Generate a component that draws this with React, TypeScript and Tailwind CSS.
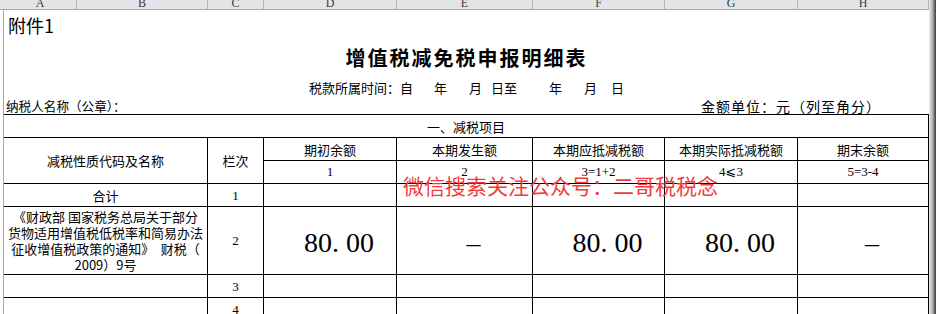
export default function App() {
  const heads = [
    { l: "A", w: "w-[73px]" },
    { l: "B", w: "w-[131px]" },
    { l: "C", w: "w-[56px]" },
    { l: "D", w: "w-[133px]" },
    { l: "E", w: "w-[136px]" },
    { l: "F", w: "w-[132px]" },
    { l: "G", w: "w-[133px]" },
    { l: "H", w: "w-[131px]" },
  ];
  const cell = "bg-white flex items-center justify-center";
  const cjk = "font-['Noto_Sans_CJK_SC',sans-serif]";
  const serif = "font-['Liberation_Serif','DejaVu_Serif',serif]";
  const big = `${cell} ${serif} text-[28px] leading-none pl-[18px] pt-[5px]`;
  return (
    <div className={`relative w-[936px] h-[314px] overflow-hidden bg-white flex text-black ${cjk}`}>
      <div className="w-[929px] shrink-0 flex flex-col">
        <div className="flex h-[10px] shrink-0 bg-[#e3e4e7] border-b border-[#a8a8a8]">
          <div className="w-[4px] h-[9px]" />
          {heads.map((h) => (
            <div
              key={h.l}
              className={`${h.w} h-[9px] overflow-hidden border-r border-[#b5b5b5] flex items-end justify-center`}
            >
              <span className={`${serif} text-[12px] leading-[11px] text-[#3a3a3a]`}>{h.l}</span>
            </div>
          ))}
        </div>
        <div className="flex flex-1">
          <div className="w-[4px] shrink-0 border-r border-[#a8a8a8]" />
          <div className="w-[925px] shrink-0 flex flex-col">
            <div className="h-[30px] flex items-center pl-[4px] text-[18px] leading-none">附件1</div>
            <div className="h-[36px] flex items-center justify-center text-[20px] font-bold tracking-[2px] leading-none">
              增值税减免税申报明细表
            </div>
            <div className="h-[22px] flex items-center justify-center text-[13px] leading-none">
              <span>税款所属时间：自</span>
              <span className="ml-[21px]">年</span>
              <span className="ml-[22px]">月</span>
              <span className="ml-[9px]">日至</span>
              <span className="ml-[32px]">年</span>
              <span className="ml-[22px]">月</span>
              <span className="ml-[14px]">日</span>
            </div>
            <div className="h-[16px] flex items-center justify-between pl-[2px] pr-[48px] leading-none">
              <span className="text-[12.6px]">纳税人名称（公章）：</span>
              <span className="text-[14px] tracking-[1px]">金额单位：元（列至角分）</span>
            </div>
            <div className="grid bg-black gap-px pt-px pr-px pb-px grid-cols-[203px_55px_132px_135px_131px_132px_130px] grid-rows-[22px_22px_22px_22px_67px_22px_22px] text-[13px] leading-none">
              <div className={`${cell} col-span-7`}>一、减税项目</div>
              <div className={`${cell} row-span-2`}>减税性质代码及名称</div>
              <div className={`${cell} row-span-2`}>栏次</div>
              <div className={cell}>期初余额</div>
              <div className={cell}>本期发生额</div>
              <div className={cell}>本期应抵减税额</div>
              <div className={cell}>本期实际抵减税额</div>
              <div className={cell}>期末余额</div>
              <div className={`${cell} ${serif} pb-[2px]`}>1</div>
              <div className={`${cell} ${serif} pb-[2px]`}>2</div>
              <div className={`${cell} ${serif} pb-[2px]`}>3=1+2</div>
              <div className={`${cell} ${serif} pb-[2px]`}>
                4<span className="font-['DejaVu_Sans',sans-serif]">⩽</span>3
              </div>
              <div className={`${cell} ${serif} pb-[2px]`}>5=3-4</div>

              <div className={cell}>合计</div>
              <div className={`${cell} ${serif}`}>1</div>
              <div className="bg-white" />
              <div className="bg-white" />
              <div className="bg-white" />
              <div className="bg-white" />
              <div className="bg-white" />

              <div className={`${cell} flex-col leading-[16px] text-center`}>
                <span>《财政部 国家税务总局关于部分</span>
                <span>货物适用增值税低税率和简易办法</span>
                <span>征收增值税政策的通知》　财税（</span>
                <span>2009）9号</span>
              </div>
              <div className={`${cell} ${serif}`}>2</div>
              <div className={big}>
                80.<span className="ml-[7px]">00</span>
              </div>
              <div className={`${big} text-[25px]`}>–</div>
              <div className={big}>
                80.<span className="ml-[7px]">00</span>
              </div>
              <div className={big}>
                80.<span className="ml-[7px]">00</span>
              </div>
              <div className={`${big} text-[25px]`}>–</div>

              <div className="bg-white" />
              <div className={`${cell} ${serif}`}>3</div>
              <div className="bg-white" />
              <div className="bg-white" />
              <div className="bg-white" />
              <div className="bg-white" />
              <div className="bg-white" />

              <div className="bg-white" />
              <div className={`${cell} ${serif}`}>4</div>
              <div className="bg-white" />
              <div className="bg-white" />
              <div className="bg-white" />
              <div className="bg-white" />
              <div className="bg-white" />
            </div>
          </div>
        </div>
      </div>
      <div className="w-[7px] shrink-0 bg-gradient-to-r from-[#eeeeee] via-[#b0b0b0] to-[#3c3c3c]" />
      <div className="absolute left-[403px] top-[175px] text-[21px] leading-none text-[#ef3b3b] whitespace-nowrap">
        微信搜索关注公众号：二哥税税念
      </div>
    </div>
  );
}
